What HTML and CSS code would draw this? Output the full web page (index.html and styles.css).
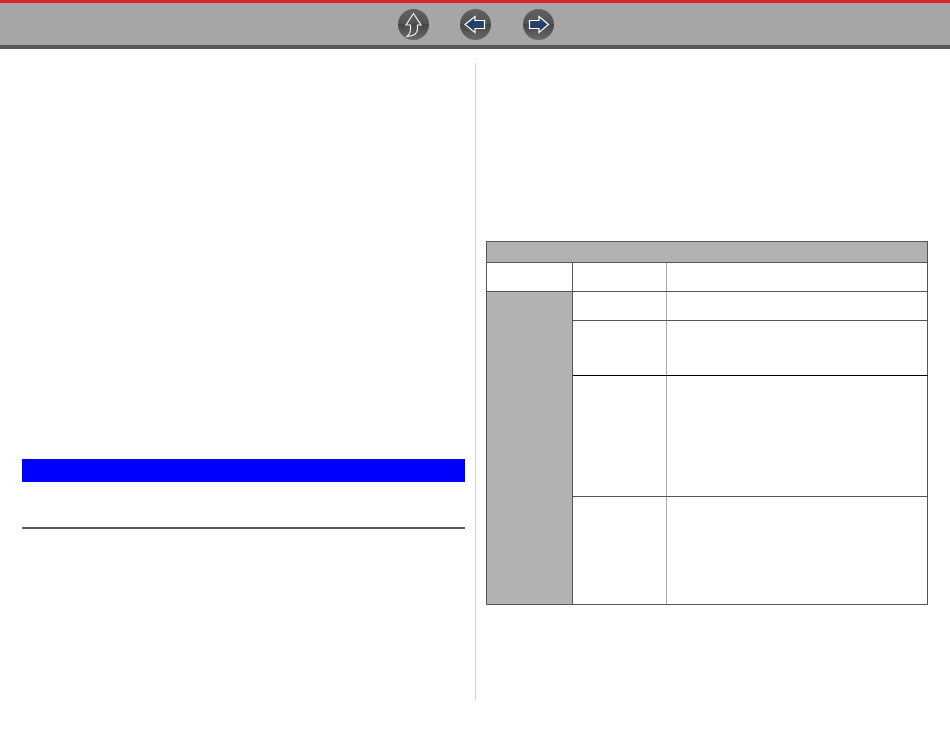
FILE: index.html

```html
<!DOCTYPE html>
<html lang="en">
<head>
<meta charset="utf-8"/>
<meta content="width=device-width, initial-scale=1.0" name="viewport"/>
<title>Manual page</title>
<link rel="stylesheet" href="styles.css">
</head>
<body>
<svg class="defs" width="0" height="0" aria-hidden="true">
<defs>
<linearGradient id="discFill" x1="0" y1="0" x2="0" y2="1">
<stop offset="0" stop-color="#626262"/>
<stop offset="0.49" stop-color="#525252"/>
<stop offset="0.5" stop-color="#464646"/>
<stop offset="1" stop-color="#6a6a6a"/>
</linearGradient>
</defs>
</svg>
<header class="topbar">
<nav class="nav">
<a class="nav-button" href="#" aria-label="Up">
<svg width="31" height="31" viewBox="0 0 31 31">
<circle cx="15.5" cy="15.5" r="15.5" fill="url(#discFill)"/>
<path d="M15.5 4.5 L23 16 L19.5 16 L19.5 20 C19.5 25 15.5 27 9 27.5 C11.5 25.5 12.5 23.5 12.5 20 L12.5 16 L8 16 Z" fill="none" stroke="#f0f0f0" stroke-width="1.2"/>
</svg>
</a>
<a class="nav-button" href="#" aria-label="Back">
<svg width="31" height="31" viewBox="0 0 31 31">
<circle cx="15.5" cy="15.5" r="15.5" fill="url(#discFill)"/>
<path d="M5 15.5 L15 7.5 L15 11.5 L24.5 11.5 L24.5 19.5 L15 19.5 L15 23.5 Z" fill="#24406c" stroke="#fff" stroke-width="1.2"/>
</svg>
</a>
<a class="nav-button" href="#" aria-label="Forward">
<svg width="31" height="31" viewBox="0 0 31 31">
<circle cx="15.5" cy="15.5" r="15.5" fill="url(#discFill)"/>
<path d="M25.5 15.5 L16 7.5 L16 11.5 L6.5 11.5 L6.5 19.5 L16 19.5 L16 23.5 Z" fill="#24406c" stroke="#fff" stroke-width="1.2"/>
</svg>
</a>
</nav>
</header>
<main class="page">
<section class="col-left">
<div class="blue-bar"></div>
<div class="rule"></div>
</section>
<section class="col-right">
<table class="spec">
<colgroup><col class="c1"><col class="c2"><col class="c3"></colgroup>
<tr class="row-head"><th colspan="3"></th></tr>
<tr class="row-a"><td class="b1"></td><td class="b2"></td><td></td></tr>
<tr class="row-b"><td class="b1 shaded" rowspan="4"></td><td class="b2"></td><td></td></tr>
<tr class="row-c"><td class="b2"></td><td></td></tr>
<tr class="row-d"><td class="b2"></td><td></td></tr>
<tr class="row-e"><td class="b2"></td><td></td></tr>
</table>
</section>
</main>
</body>
</html>
```

FILE: styles.css

```css
body {
    margin: 0;
    background: #fff;
    font-family: "Liberation Sans", sans-serif;
}
.defs {
    display: block;
    height: 0;
}
.topbar {
    height: 42px;
    background: #a6a6a6;
    border-top: 3px solid #e0202e;
    border-bottom: 4px solid #585858;
    display: flex;
    justify-content: center;
    align-items: center;
    padding-left: 2px;
}
.nav {
    display: flex;
    gap: 31px;
}
.nav-button {
    display: block;
    width: 31px;
    height: 31px;
}
.nav-button:last-child {
    margin-left: 1px;
}
.nav-button svg {
    display: block;
}
.page {
    display: flex;
    padding: 14px 0 0 22px;
}
.col-left {
    width: 443px;
    height: 637px;
    padding-right: 10px;
    border-right: 1px solid #d0d0d0;
}
.blue-bar {
    margin-top: 396px;
    height: 23px;
    background: #0000ff;
}
.rule {
    margin-top: 45px;
    height: 2px;
    background: #5a5a5a;
}
.col-right {
    padding: 178px 0 0 10px;
}
.spec {
    border-collapse: collapse;
    table-layout: fixed;
    width: 442px;
    border: 1px solid #555;
}
.spec th, .spec td {
    padding: 0;
    border-top: 1px solid #555;
    border-bottom: 1px solid #555;
}
.spec th {
    background: #b2b2b2;
}
.c1 {
    width: 86px;
}
.c2 {
    width: 94px;
}
.b1 {
    border-right: 1px solid #555;
}
.b2 {
    border-right: 1px solid #aaa;
}
.shaded {
    background: #b2b2b2;
}
.row-head { height: 21px; }
.row-a { height: 29px; }
.row-b { height: 29px; }
.row-c { height: 55px; }
.row-d { height: 121px; }
.row-e { height: 108px; }
.row-c td { border-bottom-color: #000; }
```
